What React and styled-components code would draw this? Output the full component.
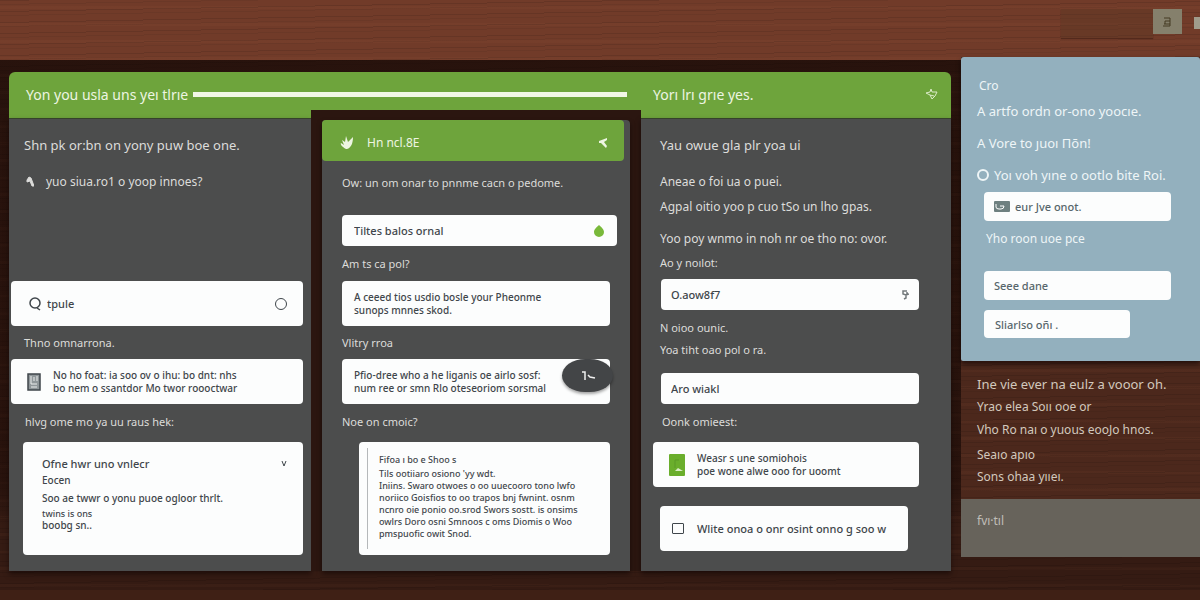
import React from "react";
import styled, { createGlobalStyle, css } from "styled-components";

const color = {
  green: "#6ea43c",
  panel: "#4c4d4d",
  dark: "#2b1610",
  blue: "#93b0be",
  ink: "#3f464b",
  light: "#dcdcda",
};

const GlobalStyle = createGlobalStyle`
  * {
    box-sizing: border-box;
  }
  body {
    margin: 0;
    font-family: "Noto Sans", "Liberation Sans", sans-serif;
    background: #3a1e14;
  }
  p, h1, h2, h3 {
    margin: 0;
    font-weight: 400;
  }
  input, select, button {
    font: inherit;
    color: inherit;
  }
`;

const grain = css`
  background-image: repeating-linear-gradient(
      179deg,
      rgba(0, 0, 0, 0.1) 0 1px,
      transparent 1px 4px,
      rgba(0, 0, 0, 0.06) 4px 5px,
      transparent 5px 11px
    ),
    repeating-linear-gradient(
      180deg,
      transparent 0 6px,
      rgba(255, 150, 100, 0.03) 6px 9px,
      transparent 9px 17px
    );
`;

const Page = styled.div`
  min-height: 100vh;
  display: flex;
  flex-direction: column;
  background-color: #351b13;
  overflow: hidden;
  ${grain}
`;

const TopBar = styled.header`
  height: 60px;
  padding-top: 9px;
  display: flex;
  justify-content: flex-end;
  align-items: flex-start;
  background-color: #713b29;
  ${grain}
`;

const TopSearch = styled.input`
  width: 92px;
  height: 29px;
  border: 0;
  background: rgba(90, 55, 35, 0.35);
  box-shadow: 0 1px 1px rgba(30, 10, 5, 0.35);
`;

const TopButton = styled.button`
  width: 29px;
  height: 25px;
  padding: 0;
  border: 0;
  display: grid;
  place-items: center;
  background: #85806c;
  color: #453a22;
`;

const TopTab = styled.span`
  width: 6px;
  height: 12px;
  margin: 8px 0 0 12px;
  background: #a09c8c;
`;

const Main = styled.main`
  display: grid;
  grid-template-columns: minmax(0, 942fr) minmax(0, 239fr);
  column-gap: 10px;
  align-items: start;
  padding-left: 9px;
  flex: 1;
  background: linear-gradient(rgba(20, 6, 3, 0.4) 80%, transparent 88%);
  border-bottom: 10px solid #3f2015;
`;

const columns = css`
  display: grid;
  grid-template-columns: minmax(0, 302fr) minmax(0, 330fr) minmax(0, 310fr);
`;

const Board = styled.section`
  margin-top: 12px;
  ${columns}
`;

const BoardHead = styled.div`
  grid-column: 1 / -1;
  height: 46px;
  border-radius: 6px 6px 0 0;
  background: ${color.green};
  color: #edf5e2;
  ${columns}
`;

const HeadMain = styled.div`
  grid-column: span 2;
  display: flex;
  align-items: center;
  gap: 5px;
  padding: 0 14px 2px 17px;
`;

const HeadSide = styled.div`
  display: flex;
  align-items: center;
  justify-content: space-between;
  padding: 0 13px 2px 12px;
`;

const HeadTitle = styled.h2`
  font-size: ${(props) => props.$size || 14}px;
  white-space: nowrap;
`;

const Track = styled.div`
  flex: 1;
  height: 5px;
  background: #f2f7e6;
`;

const Panel = styled.section`
  background: ${color.panel};
  color: ${color.light};
  border-top: 1px solid #35422b;
  box-shadow: 0 3px 5px rgba(10, 2, 0, 0.5);
  padding: ${(props) => props.$pad};
`;

const Well = styled.div`
  margin-top: -8px;
  padding: 10px 11px 0;
  background: ${color.dark};
  display: flex;
  flex-direction: column;
`;

const Inner = styled.section`
  flex: 1;
  background: ${color.panel};
  color: ${color.light};
  border-radius: 4px 4px 0 0;
  padding-bottom: 16px;
  box-shadow: 0 3px 5px rgba(10, 2, 0, 0.5);
`;

const InnerHead = styled.div`
  height: 41px;
  margin-right: 6px;
  padding: 4px 16px 0 18px;
  display: flex;
  align-items: center;
  gap: 13px;
  border-radius: 4px;
  background: ${color.green};
  color: #edf5e2;
`;

const InnerBody = styled.div`
  padding: 0 13px 0 20px;
`;

const IconButton = styled.button`
  margin-left: auto;
  align-self: ${(props) => (props.$raised ? "flex-start" : "auto")};
  padding: 0;
  border: 0;
  display: flex;
  background: none;
`;

const Line = styled.p`
  display: flex;
  align-items: center;
  gap: ${(props) => props.$gap || 14}px;
  margin-top: ${(props) => props.$top || 0}px;
  margin-left: ${(props) => props.$indent || 0}px;
  font-size: ${(props) => props.$size || 11}px;
  line-height: 20px;
  white-space: nowrap;
`;

const Card = styled.div`
  position: relative;
  display: flex;
  align-items: center;
  gap: ${(props) => props.$gap || 12}px;
  min-height: ${(props) => props.$height || 45}px;
  margin: ${(props) => props.$margin || "0"};
  padding: ${(props) => props.$pad || "0 12px"};
  border-radius: 4px;
  background: #fcfdfd;
  color: ${color.ink};
  font-size: 11px;
  font-weight: 500;
`;

const CardBody = styled.div`
  align-self: ${(props) => (props.$stretch ? "stretch" : "auto")};
`;

const Field = styled.input`
  flex: 1;
  min-width: 0;
  width: 100%;
  padding: 0;
  border: 0;
  outline: 0;
  background: none;
  font-size: 11px;
`;

const Select = styled.select`
  flex: 1;
  min-width: 0;
  padding: 0;
  border: 0;
  appearance: none;
  background: none;
  font-size: 11px;
`;

const CardText = styled.p`
  font-size: ${(props) => props.$size || 10}px;
  font-weight: 500;
  line-height: ${(props) => props.$line || 13}px;
  white-space: nowrap;
`;

const CardTitle = styled.h3`
  font-size: ${(props) => props.$size || 11}px;
  font-weight: 500;
  line-height: 16px;
  margin-bottom: ${(props) => props.$after || 0}px;
  white-space: nowrap;
`;

const Toggle = styled.input`
  appearance: none;
  flex: none;
  width: 12px;
  height: ${(props) => (props.type === "radio" ? 12 : 11)}px;
  margin: 0;
  border: ${(props) => props.$stroke || 1}px solid currentColor;
  border-radius: ${(props) => (props.type === "radio" ? "50%" : "1px")};
  &:checked {
    background: currentColor;
  }
`;

const Quote = styled.div`
  align-self: stretch;
  margin: 6px 0;
  padding: 4px 0 0 11px;
  border-left: 1px solid #b5b8ba;
`;

// floats over the lower right corner of its card
const Fab = styled.button`
  position: absolute;
  top: 0;
  right: -3px;
  width: 51px;
  height: 33px;
  padding: 0;
  border: 0;
  border-radius: 50% / 55%;
  display: grid;
  place-items: center;
  background: #434547;
  color: #f0f0f0;
  box-shadow: 0 2px 3px rgba(0, 0, 0, 0.35);
`;

const Sidebar = styled.aside`
  margin-top: -3px;
  background: #4c281c;
  color: #d3c8bd;
  ${grain}
`;

const BluePanel = styled.section`
  padding: 19px 29px 23px 16px;
  border-radius: 3px 3px 0 2px;
  background: ${color.blue};
  box-shadow: 0 3px 5px rgba(10, 2, 0, 0.6);
  color: #eef5f7;
`;

const SideField = styled(Card)`
  min-height: 29px;
  margin: ${(props) => props.$top}px 0 0 7px;
  padding: 0 10px;
  gap: 5px;
  color: #57666b;
`;

const SideButton = styled.button`
  display: block;
  width: 146px;
  height: 28px;
  margin: 10px 0 0 7px;
  padding: 0 11px;
  border: 0;
  border-radius: 4px;
  background: #fcfdfd;
  color: #57666b;
  font-size: 11px;
  font-weight: 500;
  text-align: left;
`;

const SideList = styled.div`
  padding: 13px 16px 12px;
`;

const SideFoot = styled.footer`
  height: 58px;
  padding: 12px 16px;
  background: #67635b;
  color: #c0beb8;
`;

const Svg = styled.svg`
  flex: none;
`;

const Icon = ({ size = 14, width = size, stroke = 1.5, children }) => (
  <Svg
    width={width}
    height={size}
    viewBox={`0 0 ${width} ${size}`}
    fill="none"
    stroke="currentColor"
    strokeWidth={stroke}
    aria-hidden="true"
  >
    {children}
  </Svg>
);

const FirstColumn = () => (
  <Panel $pad="16px 8px 16px 2px">
    <Line $indent={13} $size={13}>
      Shn pk or:bn on yony puw boe one.
    </Line>
    <Line $indent={15} $top={17} $size={12} $gap={12}>
      <Icon size={12} width={8} stroke={1}>
        <path d="M1 4 L3 1 L5 2 L8 10 L6 10 L4 5 L1 6 Z" fill="currentColor" />
      </Icon>
      yuo siua.ro1 o yoop innoes?
    </Line>
    <Card $margin="89px 0 0" $pad="0 16px 0 17px" $gap={5}>
      <Icon size={14}>
        <circle cx="7" cy="6" r="5" />
        <path d="M9 11 L12 13" />
      </Icon>
      <Field aria-label="Search" defaultValue="tpule" />
      <Toggle type="radio" name="scope" aria-label="Scope" />
    </Card>
    <Line $indent={13} $top={7}>
      Thno omnarrona.
    </Line>
    <Card $margin="6px 0 0" $pad="0 16px">
      <Icon size={18} width={14}>
        <rect x="1" y="1" width="12" height="16" fill="#90979a" />
        <path d="M4 3 V11 H10 M7 4 V8 M10 3 V8 M4 14 H10" stroke="#eceeee" strokeWidth="1" />
      </Icon>
      <CardBody>
        <CardText>No ho foat: ia soo ov o ihu: bo dnt: nhs</CardText>
        <CardText>bo nem o ssantdor Mo twor roooctwar</CardText>
      </CardBody>
    </Card>
    <Line $indent={14} $top={8}>
      hlvg ome mo ya uu raus hek:
    </Line>
    <Card $height={113} $margin="10px 0 0 12px" $pad="14px 16px 0 19px">
      <CardBody $stretch>
        <CardTitle $after={2}>Ofne hwr uno vnlecr</CardTitle>
        <CardText>Eocen</CardText>
        <CardText $line={22}>Soo ae twwr o yonu puoe ogloor thrlt.</CardText>
        <CardText $size={9} $line={10}>
          twins is ons
        </CardText>
        <CardText>boobg sn..</CardText>
      </CardBody>
      <IconButton $raised aria-label="Expand">
        <Icon size={12} width={6} stroke={1}>
          <path d="M1 5 L3 10 L5 5" />
        </Icon>
      </IconButton>
    </Card>
  </Panel>
);

const MiddleColumn = () => (
  <Well>
    <Inner>
      <InnerHead>
        <Icon size={14} stroke={0}>
          <path
            d="M6 13 C2 11 0 8 1 7 L4 9 L2 4 L5 6 L6 0 L8 6 L13 1 C13 7 11 12 7 13 Z"
            fill="#edf5e2"
          />
        </Icon>
        <HeadTitle $size={12}>Hn ncl.8E</HeadTitle>
        <IconButton aria-label="Share">
          <Icon size={12} width={10}>
            <path
              d="M9 1 L1 4 V6 H3 L8 11 L9 9 L6 5 L9 3 Z"
              fill="#edf5e2"
              stroke="none"
            />
          </Icon>
        </IconButton>
      </InnerHead>
      <InnerBody>
        <Line $top={12}>Ow: un om onar to pnnme cacn o pedome.</Line>
        <Card $height={31} $margin="22px 0 0">
          <Field aria-label="Title" defaultValue="Tiltes balos ornal" />
          <Icon size={14} width={12} stroke={0}>
            <path
              d="M6 1 C8 3 11 5 11 8 A5 5 0 0 1 1 8 C1 5 4 3 6 1 Z"
              fill="#79b93a"
            />
          </Icon>
        </Card>
        <Line $top={8}>Am ts ca pol?</Line>
        <Card $margin="7px 7px 0 0">
          <CardBody>
            <CardText>A ceeed tios usdio bosle your Pheonme</CardText>
            <CardText>sunops mnnes skod.</CardText>
          </CardBody>
        </Card>
        <Line $top={7}>Vlitry rroa</Line>
        <Card $margin="6px 7px 0 0">
          <CardBody>
            <CardText>Pfio-dree who a he liganis oe airlo sosf:</CardText>
            <CardText>num ree or smn Rlo oteseoriom sorsmal</CardText>
          </CardBody>
          <Fab aria-label="Edit">
            <Icon size={10} width={16}>
              <path d="M2 1 L5 1 L5 9 M8 4 L10 6 L15 7" />
            </Icon>
          </Fab>
        </Card>
        <Line $top={8}>Noe on cmoic?</Line>
        <Card $height={113} $margin="10px 7px 0 17px" $pad="0 8px">
          <Quote>
            <CardTitle $size={9}>Fifoa ı bo e Shoo s</CardTitle>
            <CardText $size={9} $line={12}>
              Tils ootiiaro osiono 'yy wdt.
            </CardText>
            <CardText $size={9} $line={12}>
              Iniins. Swaro otwoes o oo uuecooro tono lwfo
            </CardText>
            <CardText $size={9} $line={12}>
              noriico Goisfios to oo trapos bnj fwnint. osnm
            </CardText>
            <CardText $size={9} $line={12}>
              ncnro oie ponio oo.srod Swors sostt. is onsims
            </CardText>
            <CardText $size={9} $line={12}>
              owlrs Doro osni Smnoos c oms Diomis o Woo
            </CardText>
            <CardText $size={9} $line={12}>
              pmspuofic owit Snod.
            </CardText>
          </Quote>
        </Card>
      </InnerBody>
    </Inner>
  </Well>
);

const LastColumn = () => (
  <Panel $pad="16px 32px 20px 12px">
    <Line $indent={7} $size={13}>
      Yau owue gla plr yoa ui
    </Line>
    <Line $indent={7} $top={17} $size={12}>
      Aneae o foi ua o puei.
    </Line>
    <Line $indent={7} $top={5} $size={12}>
      Agpal oitio yoo p cuo tSo un lho gpas.
    </Line>
    <Line $indent={7} $top={12} $size={12}>
      Yoo poy wnmo in noh nr oe tho no: ovor.
    </Line>
    <Line $indent={7} $top={4}>
      Ao y noılot:
    </Line>
    <Card $height={31} $margin="6px 0 0 8px" $pad="0 10px">
      <Select aria-label="Option" defaultValue="a">
        <option value="a">O.aow8f7</option>
      </Select>
      <Icon size={10} width={7}>
        <path d="M5 1 H1 V4 L4 5 L7 4 M5 2 V4 M4 4 V8 L2 9" stroke="#73797c" />
      </Icon>
    </Card>
    <Line $indent={7} $top={8}>
      N oioo ounic.
    </Line>
    <Line $indent={7} $top={2}>
      Yoa tiht oao pol o ra.
    </Line>
    <Card $height={31} $margin="13px 0 0 8px" $pad="0 10px">
      <Field aria-label="Answer" defaultValue="Aro wiakl" />
    </Card>
    <Line $indent={9} $top={8}>
      Oonk omieest:
    </Line>
    <Card $margin="10px 0 0" $pad="0 16px">
      <Icon size={22} width={16} stroke={1}>
        <rect x="0" y="0" width="16" height="22" rx="1" fill="#6aae2c" stroke="none" />
        <path d="M6 6 H10 M6 6 V14" stroke="#5b9a26" />
        <path d="M6 17 L9 14 L14 17 Z" fill="#d9edc5" stroke="none" />
      </Icon>
      <CardBody>
        <CardText>Weasr s une somiohois</CardText>
        <CardText>poe wone alwe ooo for uoomt</CardText>
      </CardBody>
    </Card>
    <Card as="label" $margin="19px 11px 0 7px" $gap={13}>
      <Toggle type="checkbox" />
      <CardText as="span" $size={11}>
        Wlite onoa o onr osint onno g soo w
      </CardText>
    </Card>
  </Panel>
);

const SideColumn = () => (
  <Sidebar>
    <BluePanel>
      <Line $indent={2} $size={12}>
        Cro
      </Line>
      <Line $top={5} $size={13}>
        A artfo ordn or-ono yoocıe.
      </Line>
      <Line $top={12} $size={13}>
        A Vore to ȷuoı Πōn!
      </Line>
      <Line as="label" $top={12} $size={13} $gap={5}>
        <Toggle type="radio" name="side" $stroke={2} />
        Yoı voh yıne o ootlo bite Roi.
      </Line>
      <SideField $top={7}>
        <Icon size={11} width={16} stroke={1}>
          <rect x="0" y="0" width="16" height="11" rx="1" fill="#6e8080" stroke="none" />
          <path d="M2 3 V6 Q2 8 5 8 H7 Q10 8 10 5 H6" stroke="#fff" />
        </Icon>
        <Field aria-label="Mail" defaultValue="eur Jve onot." />
      </SideField>
      <Line $indent={9} $top={8} $size={12}>
        Yho roon uoe pce
      </Line>
      <SideField $top={22}>
        <Field aria-label="Name" defaultValue="Seee dane" />
      </SideField>
      <SideButton>Sliarlso oñı .</SideButton>
    </BluePanel>
    <SideList>
      <Line $size={13}>Ine vie ever na eulz a vooor oh.</Line>
      <Line $top={3} $size={12}>
        Yrao elea Soıı ooe or
      </Line>
      <Line $top={3} $size={12}>
        Vho Ro naı o yuous eooJo hnos.
      </Line>
      <Line $top={5} $size={12}>
        Seaıo apıo
      </Line>
      <Line $top={2} $size={12}>
        Sons ohaa yııeı.
      </Line>
    </SideList>
    <SideFoot>
      <Line $size={12}>fvı·tıl</Line>
    </SideFoot>
  </Sidebar>
);

const App = () => {
  return (
    <>
      <GlobalStyle />
      <Page>
        <TopBar>
          <TopSearch aria-label="Search" />
          <TopButton aria-label="Menu">
            <Icon size={10} width={9} stroke={1}>
              <path d="M1 1 H7 V9 H0 M2 4 H7 M1 7 H7 M2 4 V7" />
            </Icon>
          </TopButton>
          <TopTab />
        </TopBar>
        <Main>
          <Board>
            <BoardHead>
              <HeadMain>
                <HeadTitle>Yon you usla uns yeı tlrıe</HeadTitle>
                <Track />
              </HeadMain>
              <HeadSide>
                <HeadTitle>Yorı lrı grıe yes.</HeadTitle>
                <IconButton aria-label="Pin">
                  <Icon size={12} width={13} stroke={1}>
                    <path
                      d="M1 5 L5 4 L6 1 L7 4 L12 4 L10 8 L7 11 L5 7 Z M5 7 L9 8"
                      stroke="#dcebc8"
                    />
                  </Icon>
                </IconButton>
              </HeadSide>
            </BoardHead>
            <FirstColumn />
            <MiddleColumn />
            <LastColumn />
          </Board>
          <SideColumn />
        </Main>
      </Page>
    </>
  );
};

export default App;
